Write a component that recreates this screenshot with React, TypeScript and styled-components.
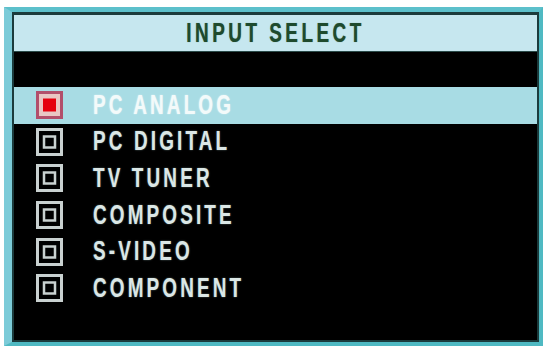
import styled, { createGlobalStyle } from 'styled-components';

const GlobalStyle = createGlobalStyle`
  html, body {
    margin: 0;
    padding: 0;
    background: #ffffff;
  }
  body {
    width: 545px;
    height: 348px;
    overflow: hidden;
  }
`

const sources = ['PC ANALOG', 'PC DIGITAL', 'TV TUNER', 'COMPOSITE', 'S-VIDEO', 'COMPONENT'];
const selected = 0;

const CheckIcon = ({ active }: { active: boolean }) => (
  active ? (
    <svg width="27" height="28" viewBox="0 0 27 28">
      <rect x="1.5" y="1.5" width="24" height="25" fill="#e9c6c4" stroke="#b24f6b" strokeWidth="3" />
      <rect x="7" y="7.5" width="13" height="13" fill="#e5000e" />
    </svg>
  ) : (
    <svg width="27" height="28" viewBox="0 0 27 28">
      <rect x="1.5" y="1.5" width="24" height="25" fill="#000" stroke="#c9d1d0" strokeWidth="3" />
      <rect x="8" y="8.5" width="11" height="11" fill="#000" stroke="#c9d1d0" strokeWidth="2.5" />
    </svg>
  )
)

const App = () => {
  return (
    <>
      <GlobalStyle />
      <Frame>
        <Screen>
          <Header>
            <HeaderText>INPUT SELECT</HeaderText>
          </Header>
          <Spacer />
          <List>
            {sources.map((name, i) => (
              <Row key={name} $active={i === selected}>
                <CheckIcon active={i === selected} />
                <Label $active={i === selected}>{name}</Label>
              </Row>
            ))}
          </List>
        </Screen>
      </Frame>
    </>
  )
}

export default App

const Frame = styled.div`
  margin: 7px 0 0 4px;
  width: 539px;
  height: 339px;
  box-sizing: border-box;
  border-style: solid;
  border-color: #4fb9c2;
  border-width: 5px 4px 4px 8px;
  border-left-color: #7ccbd8;
  border-top-color: #5cc0cb;
  background: #1b3b3c;
  padding: 3px 2px 2px 2px;
  display: flex;
`
const Screen = styled.div`
  flex: 1;
  background: #000;
  display: flex;
  flex-direction: column;
  overflow: hidden;
`
const Header = styled.div`
  height: 37px;
  background: #c6e7ef;
  border-bottom: 1px solid #2a4a48;
  box-sizing: border-box;
  display: flex;
  align-items: center;
  justify-content: center;
`
const HeaderText = styled.span`
  font-family: "Liberation Sans", Arial, sans-serif;
  font-weight: 700;
  font-size: 27px;
  letter-spacing: 5px;
  color: #1e4a2d;
  text-shadow: 0 0 1px rgba(30, 74, 45, 0.6);
  display: inline-block;
  transform: scaleX(0.7);
  transform-origin: center;
  line-height: 1;
`
const Spacer = styled.div`
  height: 35px;
`
const List = styled.div`
  display: flex;
  flex-direction: column;
`
const Row = styled.div<{ $active: boolean }>`
  height: 36.6px;
  display: flex;
  align-items: center;
  padding-left: 22px;
  gap: 30px;
  background: ${p => p.$active ? '#a8dce4' : 'transparent'};
`
const Label = styled.span<{ $active: boolean }>`
  font-family: "Liberation Sans", Arial, sans-serif;
  font-weight: 700;
  font-size: 27px;
  letter-spacing: 4.5px;
  color: ${p => p.$active ? '#f3fafa' : '#dbe7e6'};
  text-shadow: 0 0 2px ${p => p.$active ? 'rgba(255,255,255,0.6)' : 'rgba(160,200,200,0.6)'};
  display: inline-block;
  transform: scaleX(0.7);
  transform-origin: left center;
  line-height: 1;
`
